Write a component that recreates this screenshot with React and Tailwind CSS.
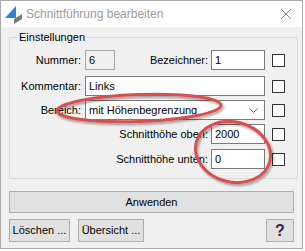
const Box = ({ w, children, readOnly, className = "" }) => (
  <div
    className={`h-[20px] flex items-center pl-[3px] border ${
      readOnly ? "bg-[#f0f0f0] border-[#a9a9a9]" : "bg-white border-[#7a7a7a]"
    } ${className}`}
    style={{ width: w }}
  >
    {children}
  </div>
);

const Check = () => (
  <div className="w-[13px] h-[13px] bg-white border border-[#333333] ml-[7px] shrink-0" />
);

const App = () => {
  return (
    <div className="w-[305px] h-[251px] bg-white relative overflow-hidden font-['Liberation_Sans',Arial,sans-serif] text-[11px] text-black">
      <div className="w-[303px] h-[249px] border border-[#aaaaaa] bg-[#f0f0f0] flex flex-col">
        {/* title bar */}
        <div className="h-[26px] bg-white flex items-center shrink-0">
          <svg width="22" height="24" viewBox="0 0 22 24" className="ml-[1px]">
            <polygon points="3,16 14,4 14,16" fill="#2f7fd8" />
            <polygon points="12,17 20,12 20,17 12,22" fill="#7a7a7a" />
          </svg>
          <span className="ml-[2px] text-[12px] text-[#9a9a9a]">Schnittführung bearbeiten</span>
          <svg width="12" height="12" viewBox="0 0 12 12" className="ml-auto mr-[10px]">
            <path d="M1 1 L11 11 M11 1 L1 11" stroke="#8a8a8a" strokeWidth="1" />
          </svg>
        </div>

        <div className="flex-1 px-[8px] pt-[4px] flex flex-col">
          <fieldset className="border border-[#dcdcdc] h-[148px] pl-[0px] pr-[12px] pt-[6px] flex flex-col">
            <legend className="ml-[7px] px-[2px] leading-[13px]">Einstellungen</legend>
            <div className="flex items-center h-[20px]">
              <span className="w-[71px] text-right">Nummer:</span>
              <Box w={30} readOnly className="ml-[4px]">6</Box>
              <span className="flex-1 text-right">Bezeichner:</span>
              <Box w={54} className="ml-[3px]">1</Box>
              <Check />
            </div>
            <div className="flex items-center h-[20px] mt-[6px]">
              <span className="w-[71px] text-right">Kommentar:</span>
              <Box w={180} className="ml-[4px]">Links</Box>
              <Check />
            </div>
            <div className="flex items-center h-[20px] mt-[4px]">
              <span className="w-[71px] text-right">Bereich:</span>
              <Box w={180} className="ml-[4px]">
                <span className="flex-1">mit Höhenbegrenzung</span>
                <svg width="9" height="5" viewBox="0 0 9 5" className="mr-[6px]">
                  <polyline points="0.5,0.5 4.5,4.5 8.5,0.5" fill="none" stroke="#606060" strokeWidth="1" />
                </svg>
              </Box>
              <Check />
            </div>
            <div className="flex items-center h-[20px] mt-[4px]">
              <span className="flex-1 text-right">Schnitthöhe oben:</span>
              <Box w={54} className="ml-[3px]">2000</Box>
              <Check />
            </div>
            <div className="flex items-center h-[20px] mt-[5px]">
              <span className="flex-1 text-right">Schnitthöhe unten:</span>
              <Box w={54} className="ml-[3px]">0</Box>
              <Check />
            </div>
          </fieldset>

          <button className="mt-[12px] h-[22px] w-full bg-[#e1e1e1] border border-[#adadad]">Anwenden</button>

          <div className="mt-[6px] flex items-center">
            <button className="h-[23px] w-[61px] bg-[#e1e1e1] border border-[#adadad]">Löschen ...</button>
            <button className="ml-[8px] h-[23px] w-[66px] bg-[#e1e1e1] border border-[#adadad]">Übersicht ...</button>
            <button className="ml-auto h-[23px] w-[28px] bg-[#e1e1e1] border border-[#adadad] text-[16px] font-bold text-[#3b1d4a] leading-none">?</button>
          </div>
        </div>
      </div>

      {/* red annotation ellipses */}
      <svg width="305" height="251" className="absolute left-0 top-0 pointer-events-none">
        <defs>
          <filter id="sh" x="-20%" y="-50%" width="140%" height="200%">
            <feDropShadow dx="1.5" dy="2" stdDeviation="1.2" floodColor="#000000" floodOpacity="0.35" />
          </filter>
        </defs>
        <g filter="url(#sh)" fill="none" stroke="#d9504f" strokeWidth="3">
          <ellipse cx="139" cy="108" rx="82" ry="13.5" transform="rotate(-2 139 108)" />
          <ellipse cx="233" cy="152" rx="38" ry="30" transform="rotate(15 233 152)" />
        </g>
      </svg>
    </div>
  );
};

export default App;
